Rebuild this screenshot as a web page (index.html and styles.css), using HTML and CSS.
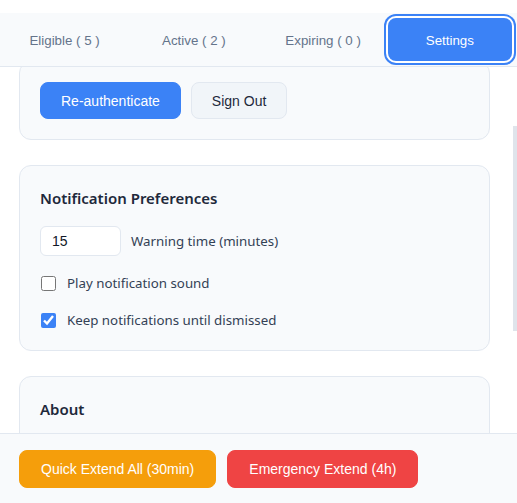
FILE: index.html
```html
<!DOCTYPE html>
<html lang="en">
<head>
<meta charset="utf-8">
<title>Settings</title>
<link rel="stylesheet" href="styles.css">
</head>
<body>
<div class="app">
  <div class="top-gap"></div>
  <nav class="tabs">
    <button class="tab">Eligible ( 5 )</button>
    <button class="tab">Active ( 2 )</button>
    <button class="tab">Expiring ( 0 )</button>
    <button class="tab tab-active">Settings</button>
  </nav>
  <div class="content-wrap">
    <main class="content" id="content">
      <section class="card" id="auth-card">
        <div class="btn-row">
          <button class="btn btn-primary">Re-authenticate</button>
          <button class="btn btn-secondary">Sign Out</button>
        </div>
      </section>
      <section class="card">
        <h3 class="card-title">Notification Preferences</h3>
        <div class="setting">
          <input class="num-input" type="text" value="15">
          <span class="setting-label">Warning time (minutes)</span>
        </div>
        <label class="setting">
          <input class="check" type="checkbox">
          <span class="setting-label">Play notification sound</span>
        </label>
        <label class="setting">
          <input class="check" type="checkbox" checked>
          <span class="setting-label">Keep notifications until dismissed</span>
        </label>
      </section>
      <section class="card card-about">
        <h3 class="card-title">About</h3>
      </section>
    </main>
    <div class="scroll-thumb"></div>
  </div>
  <footer class="footer">
    <button class="btn btn-warning">Quick Extend All (30min)</button>
    <button class="btn btn-danger">Emergency Extend (4h)</button>
  </footer>
</div>
<script src="script.js"></script>
</body>
</html>
```

FILE: styles.css
```css
* { box-sizing: border-box; }
html, body {
  margin: 0;
  padding: 0;
  height: 100%;
  background: #ffffff;
}
body {
  font-family: "Noto Sans", "Open Sans", sans-serif;
  color: #1e293b;
}
.app {
  display: flex;
  flex-direction: column;
  height: 503px;
  width: 517px;
}
.top-gap {
  height: 13px;
  flex: none;
}
.tabs {
  flex: none;
  display: grid;
  grid-template-columns: repeat(4, 1fr);
  background: #f8fafc;
  border-bottom: 1px solid #e2e8f0;
  padding: 5px 0 5px 0;
}
.tab {
  font-family: "Liberation Sans", Arial, sans-serif;
  font-size: 13.333px;
  color: #64748b;
  background: transparent;
  border: none;
  height: 43px;
  padding: 1px 0 0 0;
  cursor: pointer;
}
.tab-active {
  background: #3b82f6;
  color: #ffffff;
  border-radius: 8px;
  margin: 0 5px 0 0;
  box-shadow: 0 0 0 2px #ffffff, 0 0 0 4px #3b82f6;
}
.content-wrap {
  flex: 1;
  position: relative;
  overflow: hidden;
  min-height: 0;
}
.content {
  height: 100%;
  overflow-y: auto;
  scrollbar-width: none;
  padding: 20px 27px 60px 19px;
  background: #ffffff;
}
.content::-webkit-scrollbar { display: none; }
.scroll-thumb {
  position: absolute;
  right: 0;
  top: 59px;
  width: 4px;
  height: 205px;
  background: #dfe4eb;
}
.card {
  background: #f8fafc;
  border: 1px solid #e2e8f0;
  border-radius: 12px;
  padding: 20px;
  margin-bottom: 25px;
}
.card:last-child { margin-bottom: 0; }
.card-about { min-height: 120px; }
.card-title {
  margin: 0 0 16px 0;
  font-size: 15px;
  font-weight: 600;
  line-height: 24px;
  color: #1e293b;
}
.btn-row {
  display: flex;
  gap: 10px;
}
.btn {
  font-family: "Liberation Sans", Arial, sans-serif;
  font-size: 14px;
  height: 37px;
  padding: 0 20px;
  border-radius: 8px;
  border: 1px solid transparent;
  cursor: pointer;
}
.btn-primary {
  background: #3b82f6;
  border-color: #3b82f6;
  color: #ffffff;
}
.btn-secondary {
  background: #f1f5f9;
  border-color: #e2e8f0;
  color: #1e293b;
}
.setting {
  display: flex;
  align-items: center;
  gap: 10px;
  margin-bottom: 17px;
  min-height: 20px;
}
.setting:last-child { margin-bottom: 0; }
.num-input {
  width: 81px;
  height: 30px;
  border: 1px solid #e2e8f0;
  border-radius: 6px;
  background: #ffffff;
  padding: 0 11px;
  font-family: "Liberation Sans", Arial, sans-serif;
  font-size: 14px;
  color: #111827;
}
.check {
  width: 15px;
  height: 15px;
  margin: 0 1px 0 1px;
  accent-color: #3b82f6;
}
.setting-label {
  font-size: 13.3px;
  line-height: 20px;
  color: #334155;
}
.footer {
  flex: none;
  height: 70px;
  background: #f8fafc;
  border-top: 1px solid #e2e8f0;
  display: flex;
  align-items: flex-start;
  gap: 11px;
  padding: 16px 19px 0 19px;
}
.footer .btn { height: 38px; padding: 0 21px; }
.btn-warning {
  background: #f59e0b;
  border-color: #f59e0b;
  color: #ffffff;
}
.btn-danger {
  background: #ef4444;
  border-color: #ef4444;
  color: #ffffff;
}
```

FILE: script.js
```js
(function () {
  var content = document.getElementById('content');
  var card = document.getElementById('auth-card');
  var bottom = card.getBoundingClientRect().bottom;
  content.scrollTop = bottom - 140;
})();
```
